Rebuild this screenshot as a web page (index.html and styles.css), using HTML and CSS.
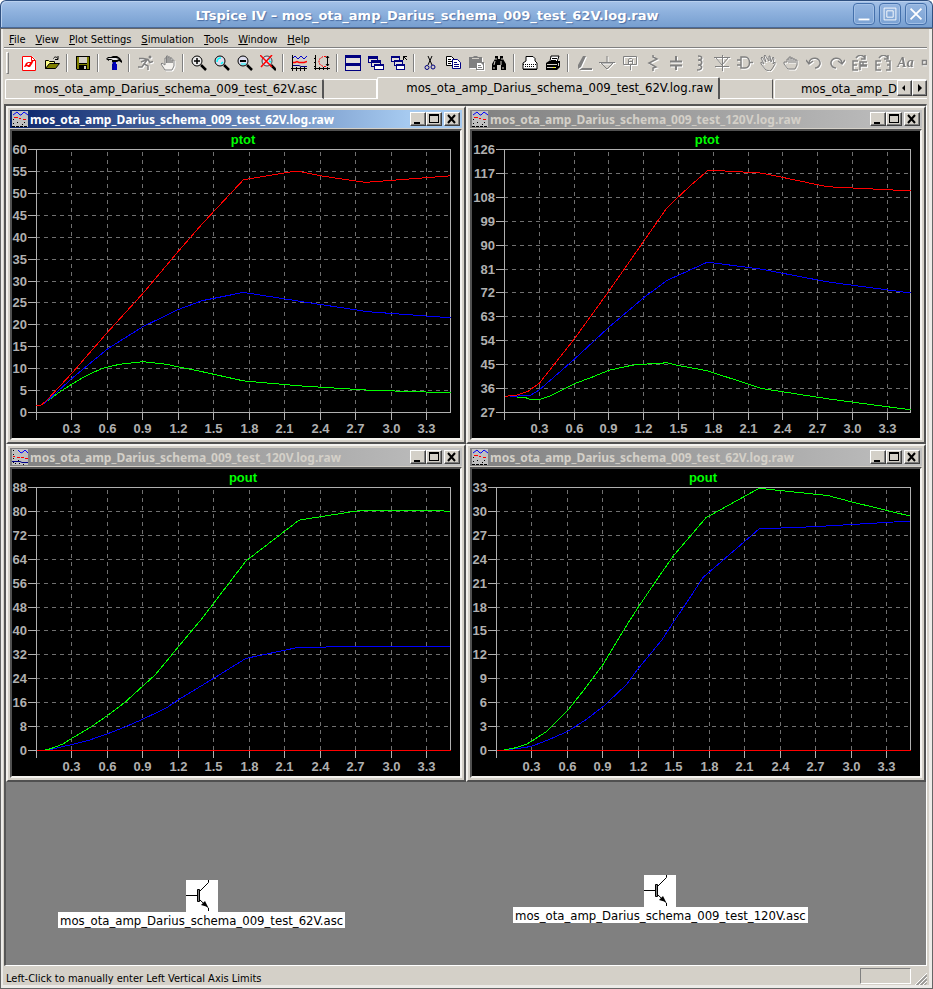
FILE: index.html
```
<!DOCTYPE html>
<html lang="en">
<head>
<meta charset="UTF-8" />
<meta name="viewport" content="width=device-width, initial-scale=1" />
<title>LTspice IV - mos_ota_amp_Darius_schema_009_test_62V.log.raw</title>
<link rel="stylesheet" href="styles.css">
</head>
<body>

<svg class="sprite" aria-hidden="true">
  <symbol id="i-new" viewBox="0 0 16 16"><path d="M1 1h10l4 4v11H1z" fill="#fff"/><path d="M1.500 1.500h9l4 4v10h-13zM10.500 1.500v4h4" fill="none" stroke="#f00"/><path d="M3 12l2-4 2-1h3l1-2h2l-2 4-2 3H7l-1-1-2 1zM7 8l-1 2h2l1-2z" fill="#f00" fill-rule="evenodd"/></symbol>
  <symbol id="i-open" viewBox="0 0 16 16"><path d="M1 5h4l1 1h5v3H5l-4 5z" fill="#ff8"/><path d="M5 9h10l-4 5H1z" fill="#808000"/><path d="M1.500 13.500v-8h3l1 1h5v2.500M1.500 13.500l4-5h10l-4 5zM9.500 3.500c1-2 3-2 4 0M14 1v3.500h-3" fill="none" stroke="#000"/></symbol>
  <symbol id="i-save" viewBox="0 0 16 16"><path d="M1 1h14v14H2l-1-1z" fill="#000"/><path d="M2 2h2v7h8V2h2v12H2z" fill="#808000"/><path d="M4 2h8v6H4z" fill="#d4d0c8"/><path d="M4 10h8v4H4z" fill="#000"/><path d="M9 11h2v3H9z" fill="#d4d0c8"/></symbol>
  <symbol id="i-hammer" viewBox="0 0 16 16"><path d="M0 4l2-2h3l2-1h4l3 2 2 3v2l-3-2-2 1H6V5H3v1z" fill="#000"/><path d="M1 4l2-1h7l3 1-2 1H7L5 4z" fill="#e8e8e8"/><path d="M7 7h3v2h1v6H6V9h1z" fill="#0000c0"/><path d="M7 7v8" stroke="#000080"/></symbol>
  <symbol id="i-run" viewBox="0 0 16 16"><circle cx="13" cy="2" r="1.500" fill="#808080"/><path d="M2 3.500h4l5 1 2 3 3-1M10 5L7 9l4 2v4M7 9l-2 3H1M9 5L4 7" fill="none" stroke="#808080" stroke-width="1.500"/></symbol>
  <symbol id="i-hand" viewBox="0 0 16 16"><path d="M5 15l-4-6 1-1 3 2V3h1.500v5V1H8v7-6h2v6-5h2v5-3h2v6l-2 4z" fill="#f4f2ee" stroke="#808080"/></symbol>
  <symbol id="i-zin" viewBox="0 0 16 16"><circle cx="6" cy="6" r="5" fill="#eee" stroke="#000"/><path d="M3 6h6M6 3v6" stroke="#000" stroke-width="1.500"/><path d="M10 10l5 5" stroke="#000" stroke-width="2.500"/></symbol>
  <symbol id="i-zfit" viewBox="0 0 16 16"><circle cx="6" cy="6" r="5" fill="#dde" stroke="#000"/><path d="M3 7c0-3 2-4 4-4M9 7l-2 2" stroke="#0ff" fill="none" stroke-width="1.500"/><path d="M10 10l5 5" stroke="#000" stroke-width="2.500"/></symbol>
  <symbol id="i-zout" viewBox="0 0 16 16"><circle cx="6" cy="6" r="5" fill="#dde" stroke="#000"/><path d="M3 6h6" stroke="#000" stroke-width="2"/><path d="M4 9h5" stroke="#0ff"/><path d="M10 10l5 5" stroke="#000" stroke-width="2.500"/></symbol>
  <symbol id="i-zall" viewBox="0 0 16 16"><circle cx="7" cy="6" r="5" fill="#dde" stroke="#444"/><path d="M8 3l2 2M9 6l2 1" stroke="#0ff" stroke-width="1.500"/><path d="M11 10l5 5" stroke="#000" stroke-width="2.500"/><path d="M0 0l12 12M12 0L1 12" stroke="#f00" stroke-width="1.500"/></symbol>
  <symbol id="i-plot" viewBox="0 0 16 16"><path d="M1 4l3-3 3 3 3-3 3 3 3-3" fill="none" stroke="#00c"/><path d="M1 7.500h3l2-1 2 1h5l3-1" fill="none" stroke="#f00" stroke-width="1.500"/><path d="M1 10.500h7l2 1h6" fill="none" stroke="#008"/><path d="M1.500 0v16M0 13.500h16M5.500 12v4M9.500 12v4M13.500 12v4" fill="none" stroke="#000"/></symbol>
  <symbol id="i-axes" viewBox="0 0 16 16"><path d="M1.500 0v15M0 13.500h16M0 3.500h2M0 7.500h2M0 11.500h2M5.500 12v3M9.500 12v3M13.500 12v3" fill="none" stroke="#000"/><path d="M12 1.500H9l-4 3v4l4 3h3" fill="none" stroke="#f00" stroke-dasharray="2 1"/><path d="M13.500 1v10M12 3l1.500-2L15 3M12 9l1.500 2L15 9" fill="none" stroke="#000"/></symbol>
  <symbol id="i-tile" viewBox="0 0 16 16"><path d="M0 0h16v16H0z" fill="#000080"/><path d="M1 3h14v5H1zM1 11h14v4H1z" fill="#e4e0dc"/></symbol>
  <symbol id="i-casc" viewBox="0 0 16 16"><path d="M0 1h10v7H0z" fill="#000080"/><path d="M1 4h8v3H1z" fill="#e4e0dc"/><path d="M3 5h10v7H3z" fill="#000080"/><path d="M4 8h8v3H4z" fill="#e4e0dc"/><path d="M6 9h10v6H6z" fill="#000080"/><path d="M7 11h8v3H7z" fill="#fff"/></symbol>
  <symbol id="i-closeall" viewBox="0 0 16 16"><path d="M0 1h9v6H0z" fill="#000080"/><path d="M1 3h7v3H1z" fill="#e4e0dc"/><path d="M3 5h9v6H3z" fill="#000080"/><path d="M4 7h7v3H4z" fill="#e4e0dc"/><path d="M5 9h9v6H5z" fill="#000080"/><path d="M6 11h7v3H6z" fill="#fff"/><path d="M12 1.500h4M12.500 1v4M13 2l3 3" stroke="#000"/></symbol>
  <symbol id="i-cut" viewBox="0 0 16 16"><path d="M6 1l4 9M10 1L6 10" stroke="#000"/><circle cx="5" cy="12.500" r="2" fill="none" stroke="#000080"/><circle cx="11" cy="12" r="2" fill="none" stroke="#000080"/></symbol>
  <symbol id="i-copy" viewBox="0 0 16 16"><path d="M1.500 1.500h5l3 3v6h-8z" fill="#fff" stroke="#000"/><path d="M3 4.500h3M3 6.500h4M3 8.500h3" stroke="#000"/><path d="M7.500 4.500h5l3 3v6h-8z" fill="#fff" stroke="#000080"/><path d="M9 7.500h3M9 9.500h5M9 11.500h5" stroke="#000080"/></symbol>
  <symbol id="i-paste" viewBox="0 0 16 16"><path d="M1 2h4l1-1h3l1 1h4v5h2v8H8v-2H1z" fill="#808080"/><path d="M4 3h7v1H4z" fill="#d4d0c8"/><path d="M9 8h4l2 2v4H9z" fill="#fff"/><path d="M10 10.500h3M10 12.500h4" stroke="#808080"/></symbol>
  <symbol id="i-find" viewBox="0 0 16 16"><path d="M4 1h3v3h2V1h3v3l3 5v6h-5v-5H6v5H1V9l3-5z" fill="#000"/><path d="M5 3v2M4 6l-1 4M11 3v2M10 6v4M3 12v2M12 12v2" stroke="#d4d0c8"/></symbol>
  <symbol id="i-setup" viewBox="0 0 16 16"><path d="M4 6V1.500h7l2 2V6l2 2v6H1V8z" fill="#fff" stroke="#000"/><path d="M1 9.500h14M3 11.500h10" stroke="#000" stroke-dasharray="1 1"/><path d="M1 14.500h14" stroke="#000"/></symbol>
  <symbol id="i-print" viewBox="0 0 16 16"><path d="M5 6l1-5h8l-2 6" fill="#fff" stroke="#000"/><path d="M7 3.500h5M6 5.500h5" stroke="#000"/><path d="M1 8l3-2h11v6l-3 3H1z" fill="#000"/><path d="M2 9h10v1H2zM2 12h9v1H2zM13 8h1v3h-1z" fill="#d4d0c8"/><path d="M8 12h2v1H8z" fill="#ff0"/></symbol>
  <symbol id="i-pencil" viewBox="0 0 16 16"><path d="M7 1h3L5 12l-3 2V10zM6 13h10v2H3z" fill="#808080"/></symbol>
  <symbol id="i-gnd" viewBox="0 0 16 16"><path d="M8 1v7M0 7.500h16M2 8l6 6 6-6z" fill="none" stroke="#808080"/></symbol>
  <symbol id="i-label" viewBox="0 0 16 16"><path d="M1.500 1.500h13v8h-13zM8.500 10v5M6.500 9V4.500l1-1h2l1 1V9M6.500 6.500h4" fill="none" stroke="#808080"/></symbol>
  <symbol id="i-res" viewBox="0 0 16 16"><path d="M8 0v2l4 2-8 4 7 4-3 1v3" fill="none" stroke="#808080" stroke-width="1.500"/></symbol>
  <symbol id="i-cap" viewBox="0 0 16 16"><path d="M8 1v5M8 10v5M2 6.500h12M2 10.500h12" stroke="#808080" stroke-width="2"/></symbol>
  <symbol id="i-ind" viewBox="0 0 16 16"><path d="M7 1c5 0 5 4 0 4 5 0 5 5 0 5 5 0 5 5-1 5" fill="none" stroke="#808080" stroke-width="1.500"/></symbol>
  <symbol id="i-diode" viewBox="0 0 16 16"><path d="M0 2.500h16M2 3l6 7 6-7M1 11.500h14M8.500 0v16" fill="none" stroke="#808080"/></symbol>
  <symbol id="i-gate" viewBox="0 0 16 16"><path d="M4 2h4c6 0 6 11 0 11H4zM0 5h4M0 10h4M13 7.500h3" fill="none" stroke="#808080" stroke-width="1.500"/></symbol>
  <symbol id="i-move" viewBox="0 0 16 16"><path d="M6 15L1 9V7l3 2-3-6 1-1 4 5-2-6 1-1 4 6V1h1l1 6 2-5 1 1-1 6 2-2v2l-3 5-2 2z" fill="none" stroke="#808080"/></symbol>
  <symbol id="i-drag" viewBox="0 0 16 16"><path d="M5 14l-4-5V7h3V4h2V2h2v2-1h2v1h2v1h2v5l-2 4zM6 4v4M8 4v4M10 4v4M12 5v3" fill="none" stroke="#808080"/></symbol>
  <symbol id="i-undo" viewBox="0 0 16 16"><path d="M3 8c1-7 12-6 11 1-1 3-3 4-5 4M0 5l3 4 4-3" fill="none" stroke="#808080" stroke-width="1.500"/></symbol>
  <symbol id="i-redo" viewBox="0 0 16 16"><path d="M13 8C12 1 1 2 2 9c1 3 3 4 5 4M16 5l-3 4-4-3" fill="none" stroke="#808080" stroke-width="1.500"/></symbol>
  <symbol id="i-rot" viewBox="0 0 16 16"><path d="M6 6H1v9h5M1 10h4M15 7H8v3h7M11 7v3M15 11h-7v4M4 3c3-4 7-3 9 0M13 0v4H9" fill="none" stroke="#808080" stroke-width="1.500"/></symbol>
  <symbol id="i-mir" viewBox="0 0 16 16"><path d="M6 6H1v9h5M1 10h4M11 6h4v9h-4M15 10h-3M4 3c3-4 7-3 9 0M13 0v4H9" fill="none" stroke="#808080" stroke-width="1.500"/></symbol>
  <symbol id="i-op" viewBox="0 0 16 16"><path d="M1.500 5.500h4v4h-4zM9 7.500h7" fill="none" stroke="#808080" stroke-width="1.500"/></symbol>
  <symbol id="i-wave" viewBox="0 0 16 16"><path d="M0 0h16v16H0z" fill="#c0c0c0"/><path d="M1 4l4-3 3 3h1l3-3 4 3" fill="none" stroke="#00f"/><path d="M2 6.500h4M7 7.500h2M11 8.500h3" stroke="#f00"/><path d="M0 15.500h16M5.500 11v1M10.500 13v1M12.500 11v1M1 12.500h1M1 8.500h1" stroke="#000" stroke-dasharray="3 1"/></symbol>
  <symbol id="i-wave2" viewBox="0 0 16 16"><path d="M0 0h16v16H0z" fill="#c0c0c0"/><path d="M6 1l3 3 2-1 2-2 3 3" fill="none" stroke="#00f"/><path d="M1 7.500h2M5 8.500h3M9 8.500h3M13 9.500h3" stroke="#f00"/><path d="M0 12.500h8l2 1h6" stroke="#008" fill="none"/><path d="M1.500 1v15M6.500 11v1M3 14.500h1M7 14.500h1M11 15.500h1" stroke="#000" stroke-dasharray="1 3"/></symbol>
  <symbol id="i-bjt" viewBox="0 0 32 32"><path d="M0 0h32v32H0z" fill="#fff"/><path d="M0 15.500h11M14 11l8.500-8.500V0M14 20l8.500 8V31" fill="none" stroke="#000"/><path d="M11.500 9.500h2v12h-2z" fill="#808080" stroke="#000"/><path d="M15 25l4-4 3 6z" fill="#000"/></symbol>
</svg>

<div class="app">
  <header class="titlebar">
    <h1 class="app-title">LTspice IV – mos_ota_amp_Darius_schema_009_test_62V.log.raw</h1>
    <div class="wm-buttons">
      <button class="wm" aria-label="Minimize"><svg viewBox="0 0 22 22"><path d="M5 16h12v2H5z" fill="#fff"/></svg></button>
      <button class="wm" aria-label="Maximize"><svg viewBox="0 0 22 22"><path d="M4.500 4.500h13v13h-13zM7.500 7.500h7v7h-7z" fill="none" stroke="#fff"/></svg></button>
      <button class="wm" aria-label="Close"><svg viewBox="0 0 22 22"><path d="M5 5l12 12M17 5L5 17" stroke="#fff" stroke-width="2"/></svg></button>
    </div>
  </header>

  <div class="client">
    <nav class="menubar">
      <button class="menu"><u>F</u>ile</button>
      <button class="menu"><u>V</u>iew</button>
      <button class="menu"><u>P</u>lot Settings</button>
      <button class="menu"><u>S</u>imulation</button>
      <button class="menu"><u>T</u>ools</button>
      <button class="menu"><u>W</u>indow</button>
      <button class="menu"><u>H</u>elp</button>
    </nav>

    <div class="toolbar" role="toolbar" aria-label="Main">
      <span class="grip"></span>
      <button class="tool" aria-label="New schematic"><svg><use href="#i-new"/></svg></button>
      <button class="tool" aria-label="Open"><svg><use href="#i-open"/></svg></button>
      <span class="sep"></span>
      <button class="tool" aria-label="Save"><svg><use href="#i-save"/></svg></button>
      <span class="sep"></span>
      <button class="tool" aria-label="Control panel"><svg><use href="#i-hammer"/></svg></button>
      <span class="sep"></span>
      <button class="tool" disabled aria-label="Run"><svg><use href="#i-run"/></svg></button>
      <button class="tool" disabled aria-label="Halt"><svg><use href="#i-hand"/></svg></button>
      <span class="sep"></span>
      <button class="tool" aria-label="Zoom in"><svg><use href="#i-zin"/></svg></button>
      <button class="tool" aria-label="Pan"><svg><use href="#i-zfit"/></svg></button>
      <button class="tool" aria-label="Zoom out"><svg><use href="#i-zout"/></svg></button>
      <button class="tool" aria-label="Zoom full extents"><svg><use href="#i-zall"/></svg></button>
      <span class="sep"></span>
      <button class="tool" aria-label="Pick visible traces"><svg><use href="#i-plot"/></svg></button>
      <button class="tool" aria-label="Autorange"><svg><use href="#i-axes"/></svg></button>
      <span class="sep"></span>
      <button class="tool" aria-label="Tile windows"><svg><use href="#i-tile"/></svg></button>
      <button class="tool" aria-label="Cascade windows"><svg><use href="#i-casc"/></svg></button>
      <button class="tool" aria-label="Close all"><svg><use href="#i-closeall"/></svg></button>
      <span class="sep"></span>
      <button class="tool" aria-label="Cut"><svg><use href="#i-cut"/></svg></button>
      <button class="tool" aria-label="Copy"><svg><use href="#i-copy"/></svg></button>
      <button class="tool" disabled aria-label="Paste"><svg><use href="#i-paste"/></svg></button>
      <button class="tool" aria-label="Find"><svg><use href="#i-find"/></svg></button>
      <span class="sep"></span>
      <button class="tool" aria-label="Print setup"><svg><use href="#i-setup"/></svg></button>
      <button class="tool" aria-label="Print"><svg><use href="#i-print"/></svg></button>
      <span class="sep"></span>
      <button class="tool" disabled aria-label="Wire"><svg><use href="#i-pencil"/></svg></button>
      <button class="tool" disabled aria-label="Ground"><svg><use href="#i-gnd"/></svg></button>
      <button class="tool" disabled aria-label="Label net"><svg><use href="#i-label"/></svg></button>
      <button class="tool" disabled aria-label="Resistor"><svg><use href="#i-res"/></svg></button>
      <button class="tool" disabled aria-label="Capacitor"><svg><use href="#i-cap"/></svg></button>
      <button class="tool" disabled aria-label="Inductor"><svg><use href="#i-ind"/></svg></button>
      <button class="tool" disabled aria-label="Diode"><svg><use href="#i-diode"/></svg></button>
      <button class="tool" disabled aria-label="Component"><svg><use href="#i-gate"/></svg></button>
      <button class="tool" disabled aria-label="Move"><svg><use href="#i-move"/></svg></button>
      <button class="tool" disabled aria-label="Drag"><svg><use href="#i-drag"/></svg></button>
      <button class="tool" disabled aria-label="Undo"><svg><use href="#i-undo"/></svg></button>
      <button class="tool" disabled aria-label="Redo"><svg><use href="#i-redo"/></svg></button>
      <button class="tool" disabled aria-label="Rotate"><svg><use href="#i-rot"/></svg></button>
      <button class="tool" disabled aria-label="Mirror"><svg><use href="#i-mir"/></svg></button>
      <button class="tool tool-text" disabled aria-label="Text">Aa</button>
      <button class="tool" disabled aria-label="SPICE directive"><svg><use href="#i-op"/></svg></button>
    </div>

    <div class="tabbar">
      <div class="tabs" role="tablist">
        <button class="tab" role="tab">mos_ota_amp_Darius_schema_009_test_62V.asc</button>
        <span class="tab-blank"></span>
        <button class="tab active" role="tab" aria-selected="true">mos_ota_amp_Darius_schema_009_test_62V.log.raw</button>
        <span class="tab-blank edge"></span>
        <button class="tab last" role="tab"><span>mos_ota_amp_Darius_schema_009_test_120V.log.raw</span></button>
      </div>
      <div class="tab-scroll">
        <button class="scroll" aria-label="Scroll left"><svg viewBox="0 0 12 12"><path d="M7 3v6L4 6z"/></svg></button>
        <button class="scroll" aria-label="Scroll right"><svg viewBox="0 0 12 12"><path d="M5 2v8l4-4z"/></svg></button>
      </div>
    </div>

    <main class="mdi">
      <div class="windows">
        <section class="win active">
          <div class="win-title">
            <svg class="win-icon"><use href="#i-wave"/></svg>
            <h2>mos_ota_amp_Darius_schema_009_test_62V.log.raw</h2>
          </div>
          <svg class="plot" data-plot="ptot62" viewBox="0 0 448 307"></svg>
        </section>
        <section class="win">
          <div class="win-title">
            <svg class="win-icon"><use href="#i-wave"/></svg>
            <h2>mos_ota_amp_Darius_schema_009_test_120V.log.raw</h2>
          </div>
          <svg class="plot" data-plot="ptot120" viewBox="0 0 448 307"></svg>
        </section>
        <section class="win">
          <div class="win-title">
            <svg class="win-icon"><use href="#i-wave2"/></svg>
            <h2>mos_ota_amp_Darius_schema_009_test_120V.log.raw</h2>
          </div>
          <svg class="plot" data-plot="pout120" viewBox="0 0 448 307"></svg>
        </section>
        <section class="win">
          <div class="win-title">
            <svg class="win-icon"><use href="#i-wave"/></svg>
            <h2>mos_ota_amp_Darius_schema_009_test_62V.log.raw</h2>
          </div>
          <svg class="plot" data-plot="pout62" viewBox="0 0 448 307"></svg>
        </section>
      </div>

      <button class="icon-win icon-62"><svg><use href="#i-bjt"/></svg><span>mos_ota_amp_Darius_schema_009_test_62V.asc</span></button>
      <button class="icon-win icon-120"><svg><use href="#i-bjt"/></svg><span>mos_ota_amp_Darius_schema_009_test_120V.asc</span></button>
    </main>

    <footer class="status">
      <span class="status-text">Left-Click to manually enter Left Vertical Axis Limits</span>
      <span class="status-cell"></span>
      <svg class="resize" viewBox="0 0 12 12"><path d="M0 12L12 0M4 12l8-8M8 12l4-4" stroke="#fff"/><path d="M1.500 12L12 1.500M2.500 12L12 2.500M5.500 12L12 5.500M6.500 12L12 6.500M9.500 12L12 9.500" stroke="#808080"/></svg>
    </footer>
  </div>
</div>

<script src="script.js"></script>
</body>
</html>
```
FILE: styles.css
```
* {
  box-sizing: border-box;
}

body {
  margin: 0;
  background: #fff;
  font-family: "DejaVu Sans Condensed", "DejaVu Sans", sans-serif;
  font-size: 11px;
  color: #000;
}

button {
  margin: 0;
  padding: 0;
  border: 0;
  background: none;
  font: inherit;
  color: inherit;
}

h1, h2 {
  margin: 0;
}

.sprite {
  display: none;
}

.app {
  display: flex;
  flex-direction: column;
  min-height: 100vh;
}

/* window manager frame */
.titlebar {
  display: flex;
  align-items: center;
  height: 28px;
  padding-right: 5px;
  border: 1px solid #2f5080;
  border-bottom-color: #4a6a9a;
  border-radius: 6px 6px 0 0;
  background: linear-gradient(#a5c2e8, #8fb2de 40%, #779fd0);
  box-shadow: inset 1px 1px 0 #b9d0ee;
}

.app-title {
  flex: 1;
  padding-top: 2px;
  text-align: center;
  font-family: "DejaVu Sans", sans-serif;
  font-size: 13px;
  font-weight: bold;
  color: #fff;
  text-shadow: 1px 1px 1px #4a6ea5;
  white-space: nowrap;
}

.wm-buttons {
  display: flex;
  gap: 4px;
}

.wm {
  width: 22px;
  height: 22px;
  border: 1px solid #4470ab;
  border-radius: 4px;
  background: linear-gradient(#94b5e0, #7ba2d3);
  box-shadow: inset 0 0 0 1px #a3c0e6;
}

.wm svg {
  display: block;
  width: 20px;
  height: 20px;
}

.client {
  flex: 1;
  display: flex;
  flex-direction: column;
  border: solid #ecebe8;
  border-width: 0 4px 4px 3px;
  outline: 1px solid #666;
  outline-offset: -1px;
  padding: 0 2px 0 1px;
  background: #d4d0c8;
}

.menubar {
  display: flex;
  gap: 10px;
  height: 21px;
  padding: 4px 5px 0;
  border-bottom: 1px solid #fff;
  box-shadow: inset 0 -1px 0 #808080;
  align-items: flex-start;
}

.menu {
  line-height: 16px;
}

/* toolbar */
.toolbar {
  display: flex;
  align-items: center;
  height: 27px;
  padding-left: 2px;
  overflow: hidden;
}

.grip {
  flex: none;
  width: 3px;
  height: 22px;
  margin-right: 8px;
  border: 1px solid;
  border-color: #fff #808080 #808080 #fff;
}

.tool {
  flex: none;
  display: flex;
  align-items: center;
  justify-content: center;
  width: 23px;
  height: 22px;
}

.tool svg {
  width: 16px;
  height: 16px;
}

.tool:disabled {
  color: #808080;
  filter: drop-shadow(1px 1px 0 #fff);
}

.tool-text {
  font-family: "Liberation Serif", serif;
  font-size: 14px;
  font-weight: bold;
  font-style: italic;
}

.sep {
  flex: none;
  width: 2px;
  height: 18px;
  margin: 0 3px;
  border-left: 1px solid #808080;
  border-right: 1px solid #fff;
}

/* document tabs */
.tabbar {
  position: relative;
  height: 28px;
  padding-top: 1px;
}

.tabs {
  display: flex;
  align-items: flex-end;
  height: 22px;
  margin-left: 1px;
}

.tab {
  flex: none;
  height: 20px;
  padding: 0 5px 0 28px;
  border: 1px solid #fff;
  border-right: 2px solid #555;
  border-radius: 2px 2px 0 0;
  font-size: 13px;
  line-height: 18px;
  white-space: nowrap;
}

.tab.active {
  height: 22px;
  padding-bottom: 2px;
  border-bottom: 0;
}

.tab.last {
  flex: 1 1 0;
  min-width: 0;
  padding: 0 30px 0 26px;
  border-right: 0;
}

.tab.last span {
  display: block;
  overflow: hidden;
}

.tab-blank {
  flex: none;
  width: 53px;
  height: 20px;
  border: 1px solid #fff;
  border-left: 0;
}

.tab-blank.edge {
  border-right: 1px solid #555;
  margin-right: 1px;
}

.tab-scroll {
  position: absolute;
  top: 4px;
  right: 0;
  display: flex;
}

.scroll {
  width: 15px;
  height: 16px;
  border: 1px solid;
  border-color: #fff #404040 #404040 #fff;
  background: #d4d0c8;
  box-shadow: inset -1px -1px 0 #808080;
}

.scroll svg {
  display: block;
  width: 12px;
  height: 12px;
}

/* MDI area */
.mdi {
  position: relative;
  flex: 1;
  border: solid;
  border-width: 2px 1px 1px 2px;
  border-color: #555 #fff #fff #555;
  background: #808080;
}

.windows {
  display: grid;
  grid-template-columns: 1fr 1fr;
}

.win {
  padding: 2px;
  border: 2px solid;
  border-color: #f4f2ee #505050 #505050 #f4f2ee;
  background: #d4d0c8;
}

.win-title {
  display: flex;
  align-items: center;
  height: 18px;
  padding-right: 2px;
  background: linear-gradient(to right, #808080, #c0c0c0);
  color: #d4d0c8;
}

.win.active .win-title {
  background: linear-gradient(to right, #0a246a, #a6caf0 88%);
  color: #fff;
}

.win-title h2 {
  flex: 1;
  padding: 1px 0 0 2px;
  font-family: "Noto Sans", sans-serif;
  font-size: 12px;
  font-weight: bold;
  line-height: 18px;
  white-space: nowrap;
}

.win-icon {
  width: 16px;
  height: 16px;
  margin-left: 2px;
}

.win-btn {
  width: 16px;
  height: 14px;
  border: 1px solid;
  border-color: #fff #404040 #404040 #fff;
  background: #d4d0c8;
  box-shadow: inset -1px -1px 0 #808080;
}

.win-btn svg {
  display: block;
  width: 14px;
  height: 12px;
}

.win-btn.close {
  margin-left: 2px;
}

.plot {
  display: block;
  width: 100%;
  height: auto;
  margin-top: 1px;
  border: 2px solid;
  border-color: #505050 #f4f2ee #f4f2ee #505050;
  background: #000;
}

.plot text {
  font-family: "Liberation Sans", Arial, sans-serif;
  font-size: 13px;
  font-weight: bold;
  fill: #b0b0b0;
}

.plot .plot-title {
  fill: #00ff00;
}

.axis {
  fill: none;
  stroke: #b0b0b0;
  shape-rendering: crispEdges;
}

.grid-line {
  stroke: #707070;
  stroke-dasharray: 4 4;
  shape-rendering: crispEdges;
}

.trace {
  fill: none;
  shape-rendering: crispEdges;
}

/* minimized schematics */
.icon-win {
  position: absolute;
  display: flex;
  flex-direction: column;
  align-items: center;
}

.icon-win svg {
  width: 32px;
  height: 32px;
}

.icon-win span {
  padding: 1px 2px 0;
  background: #fff;
  font-size: 13px;
  line-height: 15px;
  white-space: nowrap;
}

.icon-62 {
  left: 52px;
  top: 774px;
}

.icon-120 {
  left: 507px;
  top: 769px;
}

.status {
  display: flex;
  align-items: center;
  height: 19px;
  padding: 1px 0 0 2px;
}

.status-text {
  flex: 1;
  padding-top: 4px;
}

.status-cell {
  width: 51px;
  height: 16px;
  margin-right: 4px;
  border: 1px solid;
  border-color: #808080 #fff #fff #808080;
}

.resize {
  width: 12px;
  height: 12px;
  align-self: flex-end;
}
```
FILE: script.js
```
const plots = {
  ptot62: {
    title: "ptot", left: 24, min: 0, max: 60, step: 5,
    traces: [
      ["#00ff00", [[0.08,2.4],[0.17,4.2],[0.3,6.5],[0.42,8.4],[0.55,10],[0.7,11],[0.9,11.6],[1.1,11],[1.2,10.4],[1.4,9.3],[1.75,7.2],[2.22,6.1],[2.8,5.1],[3.5,4.5]]],
      ["#0000ff", [[0.05,1.8],[0.08,2.4],[0.3,7.8],[0.6,14.5],[0.9,19.6],[1.2,23.5],[1.4,25.5],[1.75,27.4],[2.22,25.4],[2.8,23],[3.5,21.6]]],
      ["#ff0000", [[0,1.6],[0.04,1.7],[0.08,2.6],[0.3,9],[0.6,18.3],[0.9,27.2],[1.2,36.8],[1.4,43],[1.5,45.9],[1.75,53.1],[2.15,54.9],[2.22,55],[2.4,54],[2.78,52.5],[3.5,54]]]
    ]
  },
  ptot120: {
    title: "ptot", left: 32, min: 27, max: 126, step: 9,
    traces: [
      ["#00ff00", [[0.06,33],[0.18,32.6],[0.23,31.8],[0.3,31.8],[0.38,33],[0.6,37.8],[0.75,40.2],[0.9,42.9],[1.1,44.8],[1.2,45.2],[1.4,45.7],[1.5,44.7],[1.75,42.7],[2.22,36],[2.8,32.1],[3.5,28]]],
      ["#0000ff", [[0.05,33.1],[0.22,33.4],[0.3,35.5],[0.6,47],[0.9,59.1],[1.2,70.2],[1.4,76.7],[1.75,83.6],[2.22,80.9],[2.78,76.2],[3.5,72]]],
      ["#ff0000", [[0,33.1],[0.1,33.5],[0.2,34.9],[0.3,38],[0.6,54.6],[0.9,72.7],[1.2,91.5],[1.4,104],[1.5,108.2],[1.6,112.3],[1.75,118],[1.9,117.9],[2.22,117.1],[2.78,112],[3.5,110.4]]]
    ]
  },
  pout120: {
    title: "pout", left: 24, min: 0, max: 88, step: 8,
    traces: [
      ["#0000ff", [[0.1,0.1],[0.2,1.1],[0.3,2],[0.45,3.5],[0.6,5.6],[0.75,7.9],[0.9,10.5],[1.1,14.3],[1.2,17],[1.5,24.2],[1.77,30.8],[2.2,34.4],[2.52,34.7],[3.5,34.8]]],
      ["#00ff00", [[0.06,0],[0.12,0.6],[0.22,2.1],[0.3,4.1],[0.45,7.6],[0.6,11.7],[0.75,16.2],[0.9,21.6],[1,25.2],[1.1,29.9],[1.2,34.7],[1.4,44.2],[1.5,49.4],[1.77,63.4],[2.22,77.1],[2.75,80.4],[3,80.4],[3.5,80.1]]],
      ["#ff0000", [[0,0],[3.5,0]]]
    ]
  },
  pout62: {
    title: "pout", left: 24, min: 0, max: 33, step: 3,
    traces: [
      ["#0000ff", [[0.1,0.1],[0.25,0.4],[0.3,0.55],[0.45,1.4],[0.6,2.4],[0.75,3.8],[0.9,5.5],[1.1,8.3],[1.2,10.3],[1.4,13.9],[1.5,16.2],[1.6,18.4],[1.75,21.8],[1.8,22.4],[2.22,27.8],[2.7,28.1],[3.5,28.8]]],
      ["#00ff00", [[0.06,0.05],[0.15,0.3],[0.25,0.75],[0.3,1.2],[0.42,2.35],[0.6,5],[0.75,7.8],[0.9,10.8],[1.1,15.7],[1.2,18],[1.4,22.4],[1.5,24.5],[1.77,29.2],[2.22,32.9],[2.8,32],[3,31.2],[3.5,29.4]]],
      ["#ff0000", [[0,0],[3.5,0]]]
    ]
  }
};

const TOP = 18;
const BOTTOM = 281;
const RIGHT = 438;
const X_MAX = 3.5;

function drawPlot(svg, plot) {
  const x = v => plot.left + v / X_MAX * (RIGHT - plot.left);
  const y = v => BOTTOM - (v - plot.min) / (plot.max - plot.min) * (BOTTOM - TOP);
  const snap = n => Math.round(n) + 0.5;
  let out = "";

  for (let v = plot.min; v <= plot.max; v += plot.step) {
    const py = snap(y(v));
    if (v > plot.min && v < plot.max) {
      out += `<line class="grid-line" x1="${plot.left}" x2="${RIGHT}" y1="${py}" y2="${py}"/>`;
    }
    out += `<line class="axis" x1="${plot.left - 8}" x2="${plot.left}" y1="${py}" y2="${py}"/>`;
    out += `<text x="${plot.left - 9}" y="${py + 4.5}" text-anchor="end">${v}</text>`;
  }

  out += `<line class="axis" x1="${plot.left + 0.5}" x2="${plot.left + 0.5}" y1="${BOTTOM}" y2="${BOTTOM + 8}"/>`;
  for (let i = 1; i <= 11; i++) {
    const px = snap(x(i * 0.3));
    out += `<line class="grid-line" x1="${px}" x2="${px}" y1="${BOTTOM}" y2="${TOP}"/>`;
    out += `<line class="axis" x1="${px}" x2="${px}" y1="${BOTTOM}" y2="${BOTTOM + 8}"/>`;
    out += `<text x="${px}" y="302" text-anchor="middle">${(i * 0.3).toFixed(1)}</text>`;
  }

  out += `<rect class="axis" x="${plot.left + 0.5}" y="${TOP + 0.5}" width="${RIGHT - plot.left}" height="${BOTTOM - TOP}"/>`;

  plot.traces.forEach(([color, points]) => {
    const line = points.map(p => (x(p[0]) + 0.5).toFixed(1) + "," + (y(p[1]) + 0.5).toFixed(1)).join(" ");
    out += `<polyline class="trace" stroke="${color}" points="${line}"/>`;
  });

  out += `<text class="plot-title" x="${(plot.left + RIGHT) / 2}" y="13" text-anchor="middle">${plot.title}</text>`;
  svg.innerHTML = out;
}

document.querySelectorAll(".plot").forEach(svg => drawPlot(svg, plots[svg.dataset.plot]));

// every child window gets the same three caption buttons
const captionButtons = `
  <button class="win-btn" aria-label="Minimize"><svg viewBox="0 0 14 12"><path d="M3 9h6v2H3z"/></svg></button>
  <button class="win-btn" aria-label="Maximize"><svg viewBox="0 0 14 12"><path d="M2 1h10v9H2zM3 3h8v6H3z" fill-rule="evenodd"/></svg></button>
  <button class="win-btn close" aria-label="Close"><svg viewBox="0 0 14 12"><path d="M3 2l7 8M10 2l-7 8" stroke="#000" stroke-width="2"/></svg></button>`;

document.querySelectorAll(".win-title").forEach(bar => bar.insertAdjacentHTML("beforeend", captionButtons));
```
